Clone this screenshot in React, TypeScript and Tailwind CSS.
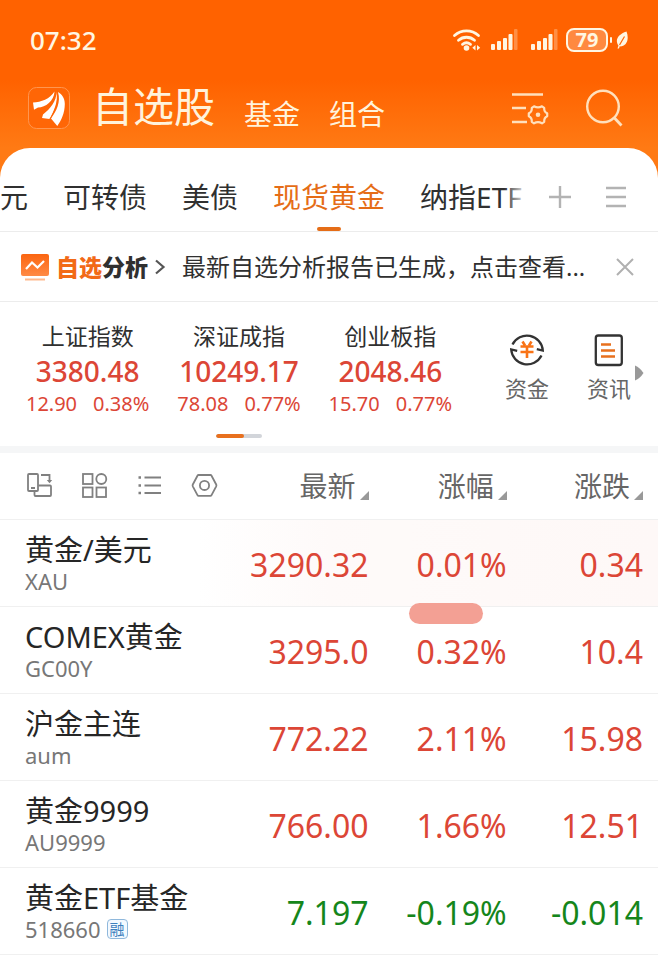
import { ReactNode } from 'react'
import clsx from 'clsx'

interface IndexQuote {
  name: string
  value: string
  change: string
  percent: string
}

interface Quote {
  name: string
  code: string
  price: string
  percent: string
  change: string
  down?: boolean
  /** Row was updated by the last tick */
  flash?: boolean
  /** Short badge shown after the code */
  badge?: string
}

const TABS = ['元', '可转债', '美债', '现货黄金', '纳指ETF']
const ACTIVE_TAB = '现货黄金'

const INDEXES: IndexQuote[] = [
  { name: '上证指数', value: '3380.48', change: '12.90', percent: '0.38%' },
  { name: '深证成指', value: '10249.17', change: '78.08', percent: '0.77%' },
  { name: '创业板指', value: '2048.46', change: '15.70', percent: '0.77%' },
]

const QUOTES: Quote[] = [
  { name: '黄金/美元', code: 'XAU', price: '3290.32', percent: '0.01%', change: '0.34', flash: true },
  { name: 'COMEX黄金', code: 'GC00Y', price: '3295.0', percent: '0.32%', change: '10.4' },
  { name: '沪金主连', code: 'aum', price: '772.22', percent: '2.11%', change: '15.98' },
  { name: '黄金9999', code: 'AU9999', price: '766.00', percent: '1.66%', change: '12.51' },
  { name: '黄金ETF基金', code: '518660', price: '7.197', percent: '-0.19%', change: '-0.014', down: true, badge: '融' },
]

function SignalIcon() {
  return (
    <svg width="28" height="24" viewBox="0 0 28 24" fill="currentColor" aria-hidden="true">
      <rect x="1" y="16" width="4" height="6" rx="1" />
      <rect x="7" y="13" width="4" height="9" rx="1" />
      <rect x="13" y="10" width="4" height="12" rx="1" />
      <rect x="18.500" y="6" width="4" height="16" rx="1" />
      <rect x="24" y="1" width="3.500" height="21" rx="1" opacity="0.3" />
    </svg>
  )
}

function StatusBar() {
  return (
    <div className="flex h-20 items-center justify-between px-[30px] text-[#fff6e2]">
      <time className="text-[26px] font-medium leading-8">07:32</time>
      <div className="flex items-center">
        <svg width="30" height="24" viewBox="0 0 30 24" fill="none" stroke="currentColor" strokeWidth="2.800" strokeLinecap="round" aria-hidden="true">
          <path d="M2.500 7.500a18 18 0 0 1 24 0" />
          <path d="M6.500 12.300a12 12 0 0 1 16 0" />
          <path d="M10.500 16.300a6.500 6.500 0 0 1 8 0" />
          <circle cx="14.500" cy="20" r="2.800" fill="currentColor" stroke="none" />
          <path d="M23.500 17v5.600l-3.200-2.800zM25 17v5.600l3.200-2.800z" fill="currentColor" stroke="none" />
        </svg>
        <div className="ml-2 flex gap-3">
          <SignalIcon />
          <SignalIcon />
        </div>
        <div className="ml-2 flex h-6 w-[42px] items-center justify-center rounded-lg border-2 border-current bg-white/25 text-[20px] font-bold leading-5">79</div>
        <div className="ml-0.5 h-1.5 w-0.5 rounded-full bg-current" />
        <svg className="ml-1" width="12" height="18" viewBox="0 0 12 18" aria-hidden="true">
          <path d="M10.500.5c2.500 6.500 1 13-4 14.500-1 .5-2 .5-2.800.3L3 17.500H1.500l1-3C-1.500 9 2 3.500 10.500.5z" fill="currentColor" />
          <path d="M8.500 5.500 3.500 14" stroke="#ff6200" strokeWidth="1.200" />
        </svg>
      </div>
    </div>
  )
}

function Header() {
  return (
    <header className="flex h-[68px] items-center pl-7 pr-[35px] text-[#fff3dc]">
      <svg className="-mt-3 shrink-0" width="42" height="42" viewBox="0 0 42 42" aria-label="东方财富" role="img">
        <rect x="0.500" y="0.500" width="41" height="41" rx="8" fill="#ff6606" stroke="#ff9650" />
        <g fill="#fff">
          <path d="M5 15.500C13 15 22 12 26.500 4.500 26 14 17.500 20.500 10 20.500l-4 2.300z" />
          <path d="M28.300 5C29 14 22 22 15 27.500l-1 3.500 7.500 1C26 24 30.500 14 28.300 5z" />
          <path d="M30 5c3 10-1.500 19-7 26.500l6.300 7.500c4-5.500 7.500-13 7.500-22C36.800 11 34 7.500 30 5z" />
        </g>
        <path d="M22 32c5-8 9-17 7.200-26" fill="none" stroke="#ff6606" strokeWidth="0.900" />
      </svg>
      <nav className="-mt-4 ml-[22px] flex flex-1 items-end gap-[29px] whitespace-nowrap">
        <a href="#stocks" className="text-[41px] leading-[56px]" aria-current="page">自选股</a>
        <a href="#funds" className="text-[28px] leading-10">基金</a>
        <a href="#portfolio" className="text-[28px] leading-10">组合</a>
      </nav>
      <div className="-mt-3 flex items-center gap-9 text-[#ffe0bd]">
        <button type="button" aria-label="设置">
          <svg width="38" height="38" viewBox="0 0 38 38" fill="none" stroke="currentColor" strokeWidth="2.600" aria-hidden="true">
            <path d="M1 5.500h31M1 19h14M1 33h15" />
            <path d="M23 17.300q4 2.200 8 0l2.200 1.500q-.3 4 3 5.500v3q-3.300 1.500-3 5.500L31 34.300q-4-2.200-8 0l-2.200-1.500q.3-4-3-5.500v-3q3.300-1.500 3-5.500z" strokeWidth="2.200" strokeLinejoin="round" />
            <circle cx="27" cy="25.800" r="2.300" fill="currentColor" stroke="none" />
          </svg>
        </button>
        <button type="button" aria-label="搜索">
          <svg width="38" height="38" viewBox="0 0 38 38" fill="none" stroke="currentColor" strokeWidth="2.400" aria-hidden="true">
            <circle cx="18" cy="17.500" r="15.800" />
            <path d="m29 28.500 7.500 8" strokeWidth="2.800" />
          </svg>
        </button>
      </div>
    </header>
  )
}

function GroupTabs() {
  return (
    <div className="flex h-[84px] items-stretch border-b border-[#ececec]">
      <nav className="relative flex min-w-0 flex-1 gap-[35px] overflow-hidden whitespace-nowrap">
        {TABS.map((tab) => (
          <a
            key={tab}
            href={`#${tab}`}
            className={clsx('relative flex shrink-0 items-center pt-3.5 text-[28px] leading-10', tab === ACTIVE_TAB ? 'text-[#e56d17]' : 'text-[#303030]')}
          >
            {tab}
            {tab === ACTIVE_TAB && <span className="absolute bottom-0 left-1/2 h-1 w-6 -translate-x-1/2 rounded-full bg-[#e56d17]" />}
          </a>
        ))}
        <span className="absolute inset-y-0 right-0 w-6 bg-linear-to-r from-transparent to-white" />
      </nav>
      <div className="flex items-center gap-8 pl-5 pr-[30px] pt-3.5 text-[#b3b3b3]">
        <button type="button" aria-label="添加分组">
          <svg width="24" height="24" viewBox="0 0 24 24" fill="none" stroke="currentColor" strokeWidth="2.400" aria-hidden="true">
            <path d="M12 1v22M1 12h22" />
          </svg>
        </button>
        <button type="button" aria-label="管理分组">
          <svg width="24" height="24" viewBox="0 0 24 24" fill="none" stroke="currentColor" strokeWidth="2.400" aria-hidden="true">
            <path d="M2 3h20M2 12h20M2 21h20" />
          </svg>
        </button>
      </div>
    </div>
  )
}

function AnalysisBanner() {
  return (
    <div className="flex h-[70px] items-center border-b border-[#ececec] pl-5 pr-6">
      <a href="#analysis" className="flex min-w-0 flex-1 items-center">
        <svg className="shrink-0" width="30" height="30" viewBox="0 0 30 30" fill="none" aria-hidden="true">
          <defs>
            <linearGradient id="chart" x1="0" y1="0" x2="0" y2="1">
              <stop offset="0" stopColor="#fb6510" />
              <stop offset="1" stopColor="#ff8a45" />
            </linearGradient>
          </defs>
          <rect x="1" y="2" width="28" height="22" rx="2" fill="url(#chart)" />
          <path d="m6 17 6-6.500 5.500 5L24 9" stroke="#fff" strokeWidth="2.200" />
          <path d="M5 27.500h20" stroke="#ffb88c" strokeWidth="2" />
        </svg>
        <strong className="ml-1.5 shrink-0 text-[23px] font-black leading-8 text-[#303030]">
          <span className="text-[#f26a17]">自选</span>分析
        </strong>
        <svg className="ml-1.5 shrink-0" width="12" height="18" viewBox="0 0 12 18" fill="none" stroke="#555" strokeWidth="2.200" aria-hidden="true">
          <path d="m2 2.500 7.500 6.500L2 15.500" />
        </svg>
        <span className="ml-4 whitespace-nowrap text-[24px] leading-8 text-[#303030]">最新自选分析报告已生成，点击查看...</span>
      </a>
      <button type="button" aria-label="关闭" className="shrink-0">
        <svg width="18" height="18" viewBox="0 0 18 18" fill="none" stroke="#b0b0b0" strokeWidth="2" aria-hidden="true">
          <path d="m1 1 16 16M17 1 1 17" />
        </svg>
      </button>
    </div>
  )
}

function ShortcutLink({ label, children }: { label: string; children: ReactNode }) {
  return (
    <a href={`#${label}`} className="flex flex-1 flex-col items-center gap-1 text-[22px] leading-8 text-[#666]">
      <svg width="36" height="36" viewBox="0 0 36 36" fill="none" aria-hidden="true">
        {children}
      </svg>
      {label}
    </a>
  )
}

function IndexStrip() {
  return (
    <section className="flex h-[151px] border-b-[7px] border-[#f5f6f7] pl-3 pt-[18px]">
      <div className="flex-1">
        <div className="grid grid-cols-3 whitespace-nowrap text-center">
          {INDEXES.map((index) => (
            <a key={index.name} href={`#${index.name}`} className="text-[#dc4636]">
              <div className="text-[23px] leading-8 text-[#303030]">{index.name}</div>
              <div className="text-[28px] font-medium leading-[38px]">{index.value}</div>
              <div className="flex justify-center gap-4 text-[20px] leading-7">
                <span>{index.change}</span>
                <span>{index.percent}</span>
              </div>
            </a>
          ))}
        </div>
        <div className="mx-auto mt-4 h-1 w-[46px] overflow-hidden rounded-full bg-[#d2d5da]">
          <div className="h-full w-7 rounded-full bg-[#e8701e]" />
        </div>
      </div>
      <div className="relative flex w-[192px] pl-5 pr-2 pt-3">
        <ShortcutLink label="资金">
          <path d="M3.500 12.500A16 16 0 0 1 33.800 18.500l-6-1.300M32.500 23.500A16 16 0 0 1 2.200 17.500l6 1.300" stroke="#333" strokeWidth="2.300" />
          <path d="m13.500 9.500 2.500 4M22.500 9.500l-2.500 4M11.500 14.500h13M11.500 20h13M18 14.500v11.500" stroke="#f97316" strokeWidth="2.600" />
        </ShortcutLink>
        <ShortcutLink label="资讯">
          <rect x="4.800" y="3.500" width="26" height="29.500" rx="2.500" stroke="#333" strokeWidth="2.300" />
          <path d="M10 12.500h10M10 18.500h14M10 24.500h14" stroke="#e8701e" strokeWidth="2.400" />
        </ShortcutLink>
        <svg className="absolute right-3.5 top-11" width="10" height="18" viewBox="0 0 10 18" fill="#999" aria-hidden="true">
          <path d="M1 1.500q5 2 8.500 7.500Q6 14.500 1 16.500z" />
        </svg>
      </div>
    </section>
  )
}

function ToolButton({ label, children }: { label: string; children: ReactNode }) {
  return (
    <button type="button" aria-label={label}>
      <svg width="27" height="27" viewBox="0 0 27 27" fill="none" stroke="#808080" strokeWidth="1.800" aria-hidden="true">
        {children}
      </svg>
    </button>
  )
}

function SortHeader({ label, className }: { label: string; className?: string }) {
  return (
    <th scope="col" className={clsx('p-0 font-normal', className)}>
      <button type="button" className="flex w-full items-end justify-end gap-1 whitespace-nowrap text-[28px] leading-10 text-[#666]">
        {label}
        <svg className="mb-1.5" width="9" height="9" viewBox="0 0 9 9" fill="#999" aria-hidden="true">
          <path d="M9 0v9H0z" />
        </svg>
      </button>
    </th>
  )
}

function QuoteTable() {
  return (
    <table className="w-full table-fixed border-collapse">
      <thead>
        <tr className="h-[66px] border-b border-[#f0f0f0]">
          <th scope="col" className="p-0 pl-[26px]">
            <div className="flex gap-7">
              <ToolButton label="横屏">
                <rect x="2" y="2" width="10" height="17" rx="1" />
                <path d="M5 16h4M15 3h8.500v6M12.500 13.500H24a1 1 0 0 1 1 1V23a1 1 0 0 1-1 1H9.500a1 1 0 0 1-1-1v-3.500" />
                <path d="M20.800 8h5.400l-2.700 3.200z" fill="#808080" stroke="none" />
              </ToolButton>
              <ToolButton label="宫格">
                <rect x="2" y="2" width="9.500" height="10" />
                <circle cx="20.300" cy="7" r="5" />
                <rect x="2" y="15.500" width="9.500" height="9.500" />
                <rect x="15.500" y="15.500" width="9.500" height="9.500" />
              </ToolButton>
              <ToolButton label="列表">
                <path d="M8.500 5.500H25M8.500 13.500H25M8.500 21H25" strokeWidth="2" />
                <path d="M2.500 5.500H5M2.500 13.500H5M2.500 21H5" strokeWidth="2.500" />
              </ToolButton>
              <ToolButton label="更多设置">
                <path d="M7.500 3h12a1 1 0 0 1 .9.500l4.800 9a2 2 0 0 1 0 1.800l-4.800 9a1 1 0 0 1-.9.500h-12a1 1 0 0 1-.9-.5l-4.800-9a2 2 0 0 1 0-1.800l4.800-9a1 1 0 0 1 .9-.5z" />
                <circle cx="13.500" cy="13.400" r="4.600" />
              </ToolButton>
            </div>
          </th>
          <SortHeader label="最新" className="w-[21%]" />
          <SortHeader label="涨幅" className="w-[21%]" />
          <SortHeader label="涨跌" className="w-[23%] pr-[15px]" />
        </tr>
      </thead>
      <tbody>
        {QUOTES.map((quote) => (
          <tr
            key={quote.code}
            className={clsx(
              'h-[87px] whitespace-nowrap border-b border-[#f0f0f0] text-right text-[32px] leading-10',
              quote.down ? 'text-[#15861b]' : 'text-[#dc4636]',
              quote.flash && 'bg-linear-to-r from-white from-30% via-[#fefaf9] via-50% to-[#fef8f7]',
            )}
          >
            <th scope="row" className="p-0 pl-[25px] text-left font-normal">
              <div className="text-[29px] leading-9 text-[#262626]">{quote.name}</div>
              <div className="flex items-center gap-1.5 text-[22px] leading-[26px] text-[#777]">
                {quote.code}
                {quote.badge && <span className="rounded-sm border border-[#8fb8dc] bg-[#f3f9ff] px-0.5 text-[15px] leading-[18px] text-[#3d80bd]">{quote.badge}</span>}
              </div>
            </th>
            <td className="p-0 pt-1">{quote.price}</td>
            <td className="relative p-0 pt-1">
              {quote.percent}
              {quote.flash && <span className="absolute -bottom-[18px] right-6 z-10 h-[21px] w-[74px] rounded-full bg-[#f3a094]" />}
            </td>
            <td className="p-0 pr-[15px] pt-1">{quote.change}</td>
          </tr>
        ))}
      </tbody>
    </table>
  )
}

export default function App() {
  return (
    <div className="min-h-screen bg-white font-['Noto_Sans','Noto_Sans_CJK_SC',sans-serif]">
      <div className="bg-[linear-gradient(#ff6200_80px,#ff7a14_148px)]">
        <StatusBar />
        <Header />
        <main className="rounded-t-[30px] bg-white">
          <GroupTabs />
          <AnalysisBanner />
          <IndexStrip />
          <QuoteTable />
        </main>
      </div>
    </div>
  )
}
